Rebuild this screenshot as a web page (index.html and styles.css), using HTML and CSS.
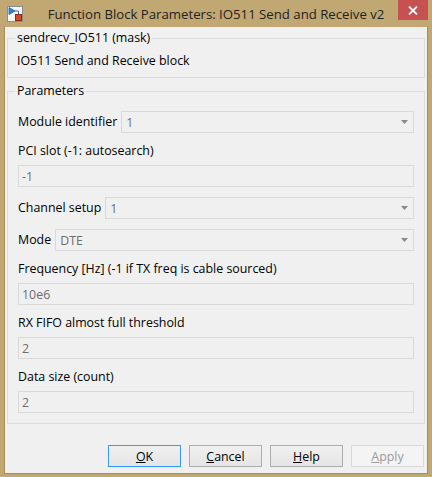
FILE: index.html
```html
<!DOCTYPE html>
<html>
<head>
<meta charset="utf-8">
<link rel="stylesheet" href="styles.css">
</head>
<body>
<div class="window">
  <div class="titlebar">
    <svg class="appicon" width="16" height="16" viewBox="0 0 16 16">
      <rect x="0.5" y="0.5" width="15" height="15" fill="#f6f6f6" stroke="#8d8d8d"/>
      <polygon points="2,1.5 2,8.5 8,5" fill="#2f86d8" stroke="#1d5fa6" stroke-width="0.8"/>
      <polyline points="8,5 11.5,5 11.5,8.5" fill="none" stroke="#3a6ea8" stroke-width="1"/>
      <rect x="8.5" y="8.5" width="6" height="6" fill="#d9471c" stroke="#8a2a10"/>
    </svg>
    <div class="title">Function Block Parameters: IO511 Send and Receive v2</div>
    <div class="close">
      <svg width="10" height="9" viewBox="0 0 10 9">
        <path d="M1 0.5 L9 8.5 M9 0.5 L1 8.5" stroke="#fff" stroke-width="1.8" fill="none"/>
      </svg>
    </div>
  </div>
  <div class="client">
    <fieldset class="group mask">
      <legend>sendrecv_IO511 (mask)</legend>
      <p class="desc">IO511 Send and Receive block</p>
    </fieldset>
    <fieldset class="group params">
      <legend>Parameters</legend>
      <div class="param inline">
        <span class="lbl">Module identifier</span>
        <div class="select"><span class="val">1</span><svg class="arrow" width="7" height="4" viewBox="0 0 7 4"><polygon points="0,0 7,0 3.5,4" fill="#8a8a8a"/></svg></div>
      </div>
      <div class="param">
        <span class="lbl">PCI slot (-1: autosearch)</span>
        <div class="field"><span class="val">-1</span></div>
      </div>
      <div class="param inline">
        <span class="lbl">Channel setup</span>
        <div class="select"><span class="val">1</span><svg class="arrow" width="7" height="4" viewBox="0 0 7 4"><polygon points="0,0 7,0 3.5,4" fill="#8a8a8a"/></svg></div>
      </div>
      <div class="param inline">
        <span class="lbl">Mode</span>
        <div class="select"><span class="val">DTE</span><svg class="arrow" width="7" height="4" viewBox="0 0 7 4"><polygon points="0,0 7,0 3.5,4" fill="#8a8a8a"/></svg></div>
      </div>
      <div class="param">
        <span class="lbl">Frequency [Hz] (-1 if TX freq is cable sourced)</span>
        <div class="field"><span class="val">10e6</span></div>
      </div>
      <div class="param">
        <span class="lbl">RX FIFO almost full threshold</span>
        <div class="field"><span class="val">2</span></div>
      </div>
      <div class="param">
        <span class="lbl">Data size (count)</span>
        <div class="field"><span class="val">2</span></div>
      </div>
    </fieldset>
    <div class="buttons">
      <button class="btn default"><u>O</u>K</button>
      <button class="btn"><u>C</u>ancel</button>
      <button class="btn"><u>H</u>elp</button>
      <button class="btn disabled"><u>A</u>pply</button>
    </div>
  </div>
</div>
</body>
</html>
```
FILE: styles.css
```css
html, body {
  margin: 0;
  padding: 0;
}
body {
  width: 432px;
  height: 477px;
  overflow: hidden;
}
.window {
  width: 432px;
  height: 477px;
  box-sizing: border-box;
  background: #c1a872;
  display: flex;
  flex-direction: column;
  font-family: "Segoe UI", "Open Sans", sans-serif;
  font-size: 12.4px;
  color: #000;
}
.titlebar {
  height: 26px;
  flex: none;
  display: grid;
  grid-template-columns: 1fr auto 1fr;
  align-items: start;
}
.appicon {
  margin: 6px 0 0 7px;
  display: block;
}
.title {
  font-size: 13.2px;
  line-height: 20px;
  padding-top: 4px;
  color: #222;
  white-space: nowrap;
}
.close {
  justify-self: end;
  margin-right: 4px;
  width: 30px;
  height: 20px;
  background: #c75050;
  display: flex;
  align-items: center;
  justify-content: center;
}
.close svg {
  display: block;
}
.client {
  flex: 1;
  margin: 0 4px 3px;
  border: 1px solid #a38e5e;
  border-top-color: #c1a872;
  background: #f0f0f0;
  padding: 0 2px;
  display: flex;
  flex-direction: column;
}
.group {
  margin: 0;
  border: 1px solid #dcdcdc;
  padding: 0 10px 8px;
  min-width: 0;
}
.group legend {
  padding: 0 2px;
  margin-left: -3px;
  line-height: 16px;
}
.mask {
  margin-top: 3px;
}
.desc {
  margin: 7px 0 0;
  line-height: 16px;
  margin-left: -1px;
}
.params {
  margin-top: 5px;
  padding-top: 12px;
  padding-bottom: 10px;
  display: flex;
  flex-direction: column;
  gap: 10px;
}
.param {
  display: flex;
  flex-direction: column;
  gap: 6px;
}
.param.inline {
  flex-direction: row;
  align-items: center;
  gap: 4px;
}
.lbl {
  line-height: 16px;
  white-space: nowrap;
}
.field, .select {
  height: 22px;
  box-sizing: border-box;
  border: 1px solid #d9d9d9;
  background: #f0f0f0;
  display: flex;
  align-items: center;
  color: #6d6d6d;
}
.field {
  padding-left: 3px;
}
.select {
  flex: 1;
  padding: 0 5px 0 4px;
  justify-content: space-between;
}
.arrow {
  display: block;
}
.buttons {
  margin-top: 21px;
  margin-right: 1px;
  display: flex;
  justify-content: flex-end;
  gap: 8px;
}
.btn {
  width: 73px;
  height: 22px;
  box-sizing: border-box;
  border: 1px solid #adadad;
  background: linear-gradient(#f0f0f0, #e5e5e5);
  font-family: inherit;
  font-size: 12.4px;
  color: #000;
  padding: 0;
  margin: 0;
}
.btn.default {
  border-color: #3399ff;
}
.btn.disabled {
  border-color: #d9d9d9;
  background: #f4f4f4;
  color: #9a9a9a;
}
```
